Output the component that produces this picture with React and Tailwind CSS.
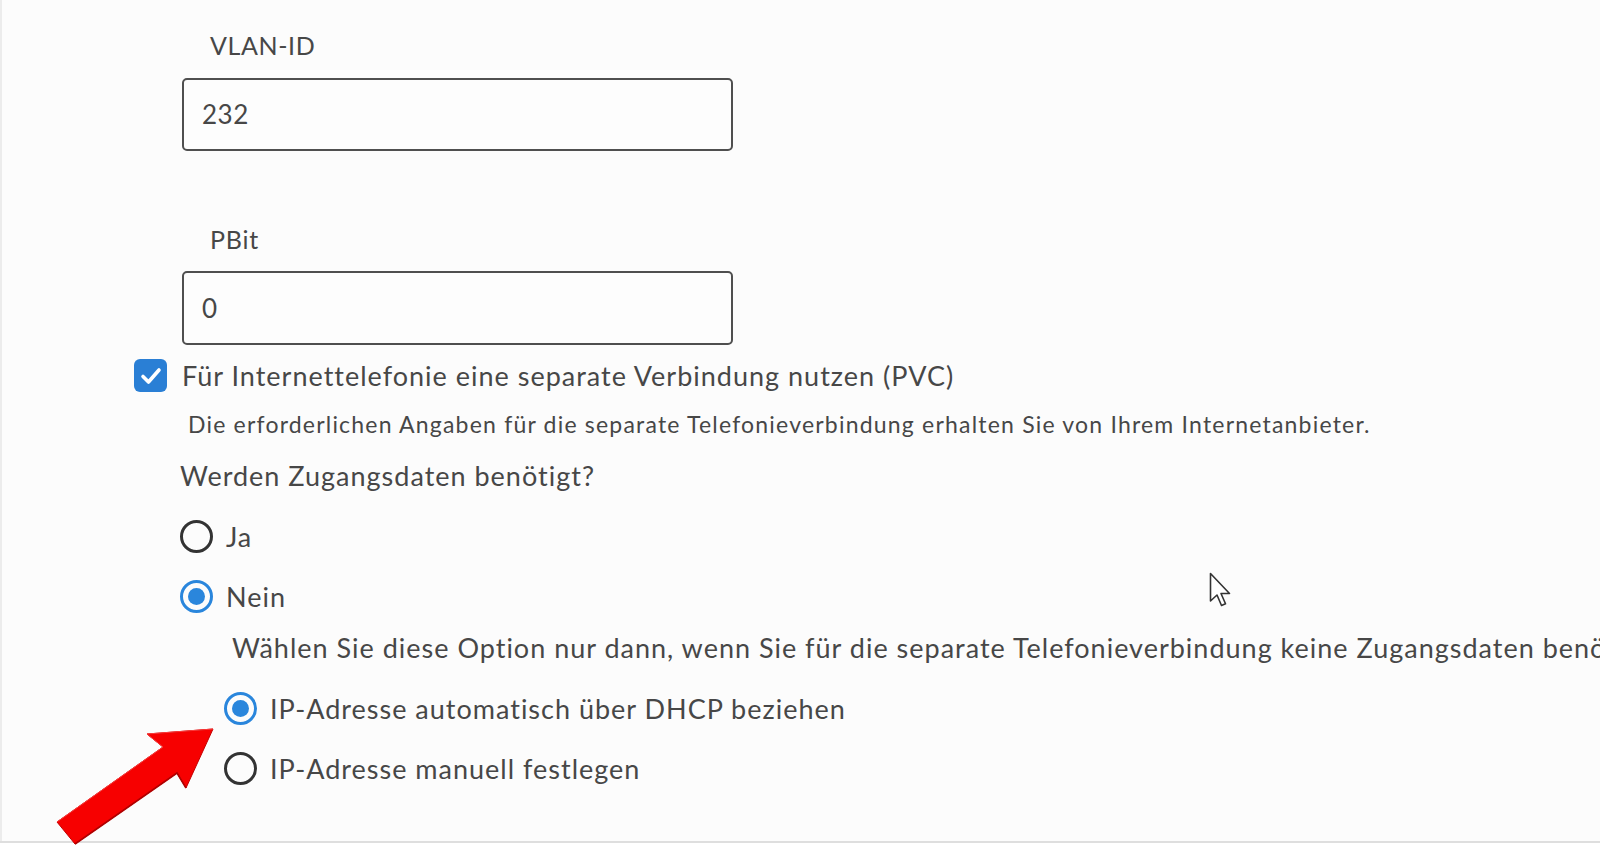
import React from "react";

function Radio({ checked }) {
  if (checked) {
    return (
      <div className="w-[33px] h-[33px] rounded-full border-[3px] border-[#2a86dc] flex items-center justify-center shrink-0">
        <div className="w-[17px] h-[17px] rounded-full bg-[#2a86dc]" />
      </div>
    );
  }
  return <div className="w-[33px] h-[33px] rounded-full border-[3px] border-[#333] shrink-0" />;
}

export default function App() {
  return (
    <div
      className="relative w-[1600px] h-[853px] overflow-hidden bg-[#fcfcfc] text-[#474747] flex flex-col"
      style={{ fontFamily: "Lato, 'Noto Sans', sans-serif" }}
    >
      <div className="h-[841px] border-l-2 border-[#ececec] pl-[132px] pt-[27px] flex flex-col">
        <div className="ml-[76px] h-[36px] leading-[36px] text-[25px] tracking-[0.6px]">VLAN-ID</div>
        <div className="mt-[15px] ml-[48px] w-[551px] h-[73px] border-2 border-[#4f4f4f] rounded-[5px] pl-[18px] flex items-center text-[26px] tracking-[0.5px] bg-[#fdfdfd]">
          232
        </div>
        <div className="mt-[70px] ml-[76px] h-[36px] leading-[36px] text-[25px] tracking-[0.8px]">PBit</div>
        <div className="mt-[14px] ml-[48px] w-[551px] h-[74px] border-2 border-[#4f4f4f] rounded-[5px] pl-[18px] flex items-center text-[26px] bg-[#fdfdfd]">
          0
        </div>
        <div className="mt-[14px] flex items-center h-[33px]">
          <div className="w-[33px] h-[33px] rounded-[6px] bg-[#2a7fd5] flex items-center justify-center shrink-0">
            <svg width="24" height="24" viewBox="0 0 24 24">
              <path d="M4 12.5 L9.5 18 L20 6" fill="none" stroke="#fff" strokeWidth="3.6" strokeLinecap="round" strokeLinejoin="round" />
            </svg>
          </div>
          <div className="ml-[15px] text-[27px] leading-[36px] tracking-[1px] whitespace-nowrap">
            Für Internettelefonie eine separate Verbindung nutzen (PVC)
          </div>
        </div>
        <div className="mt-[15px] ml-[54px] text-[23px] leading-[34px] tracking-[1.2px] whitespace-nowrap">
          Die erforderlichen Angaben für die separate Telefonieverbindung erhalten Sie von Ihrem Internetanbieter.
        </div>
        <div className="mt-[17px] ml-[46px] text-[27px] leading-[36px] tracking-[1px] whitespace-nowrap">
          Werden Zugangsdaten benötigt?
        </div>
        <div className="mt-[26px] ml-[46px] flex items-center h-[33px]">
          <Radio />
          <div className="ml-[13px] text-[27px] leading-[36px] tracking-[1px]">Ja</div>
        </div>
        <div className="mt-[27px] ml-[46px] flex items-center h-[33px]">
          <Radio checked />
          <div className="ml-[13px] text-[27px] leading-[36px] tracking-[1px]">Nein</div>
        </div>
        <div className="mt-[17px] ml-[98px] text-[27px] leading-[36px] tracking-[1px] whitespace-nowrap">
          Wählen Sie diese Option nur dann, wenn Sie für die separate Telefonieverbindung keine Zugangsdaten benötigen.
        </div>
        <div className="mt-[26px] ml-[90px] flex items-center h-[33px]">
          <Radio checked />
          <div className="ml-[13px] text-[27px] leading-[36px] tracking-[1px] whitespace-nowrap">IP-Adresse automatisch über DHCP beziehen</div>
        </div>
        <div className="mt-[27px] ml-[90px] flex items-center h-[33px]">
          <Radio />
          <div className="ml-[13px] text-[27px] leading-[36px] tracking-[1px] whitespace-nowrap">IP-Adresse manuell festlegen</div>
        </div>
      </div>
      <div className="flex-1 border-t-2 border-[#dedede] bg-white" />

      {/* red arrow overlay */}
      <svg className="absolute left-0 top-0" width="1600" height="853" viewBox="0 0 1600 853" style={{ pointerEvents: "none" }}>
        <polygon
          points="57,822 163,747 147,734 213,729 186,788 177,773 75,844"
          fill="#f70000"
          stroke="#c40000"
          strokeWidth="1"
          strokeLinejoin="miter"
        />
        <polyline points="75,844 177,773 186,788" fill="none" stroke="#b00000" strokeWidth="1.6" />
        <polyline points="57,822 163,747 147,734 213,729" fill="none" stroke="#ff3a3a" strokeWidth="1" />
      </svg>

      {/* mouse cursor */}
      <svg className="absolute left-[1209px] top-[572px]" width="26" height="38" viewBox="0 0 26 38">
        <path d="M1.5 1.5 L1.5 29 L8 23 L12.5 33.5 L16.5 31.8 L12 21.5 L20.5 21.5 Z" fill="#fff" stroke="#333" strokeWidth="1.6" strokeLinejoin="round" />
      </svg>
    </div>
  );
}
